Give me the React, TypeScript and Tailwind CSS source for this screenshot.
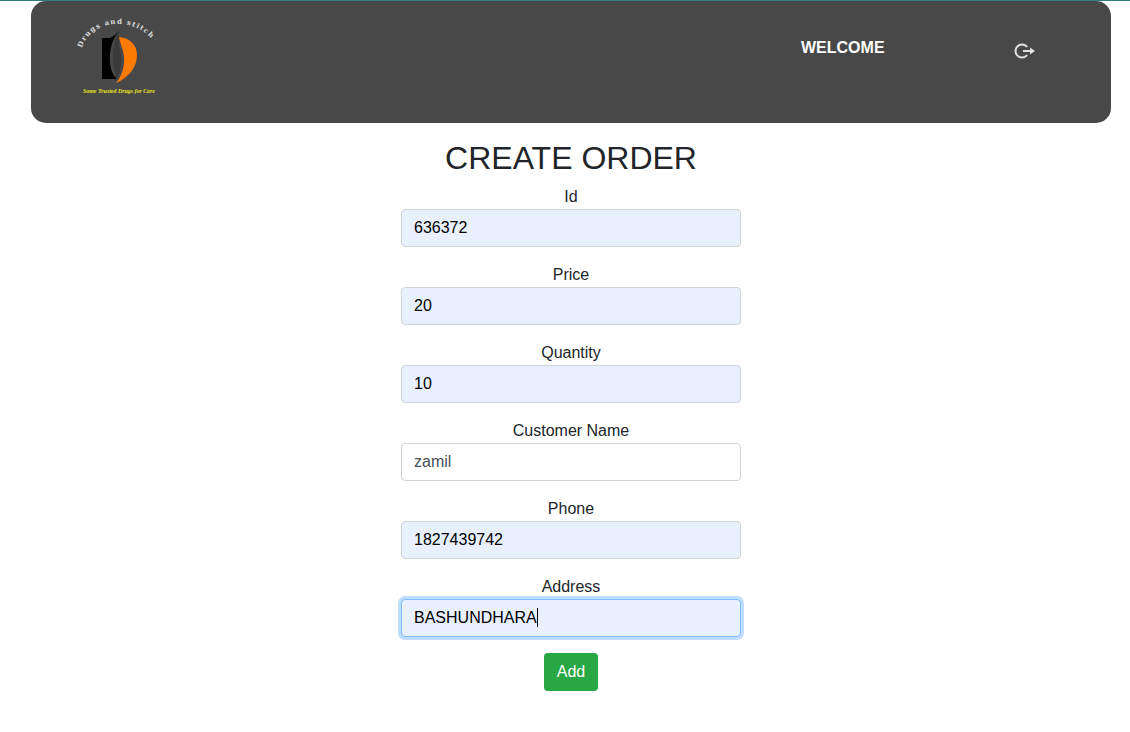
const fields = [
  { label: 'Id', value: '636372', filled: true },
  { label: 'Price', value: '20', filled: true },
  { label: 'Quantity', value: '10', filled: true },
  { label: 'Customer Name', value: 'zamil', filled: false },
  { label: 'Phone', value: '1827439742', filled: true },
];

const Logo = () => (
  <svg width="120" height="110" viewBox="0 0 120 110" className="block">
    <defs>
      <path id="logo-arc" d="M22 47 C 32 14, 86 14, 100 52" fill="none" />
    </defs>
    <text fontFamily="'DejaVu Serif', serif" fontSize="7" fontWeight="700" fill="#dcdcdc" letterSpacing="1.2">
      <textPath href="#logo-arc">Drugs and stitch</textPath>
    </text>
    {/* black half of the D */}
    <path d="M42 37 H50 C54 35 56 33 59 30 C52 38 49 50 50 62 C51 70 53 74 57 78 H42 Z" fill="#000" />
    <path d="M59 30 C54 40 52 52 53 60 C54 68 55 73 57 78 C60 72 62 64 61 55 C60 46 58 40 59 30 Z" fill="#3a3a3a" />
    {/* orange half */}
    <path d="M59 36 C70 37 77 44 77 54 C77 67 68 77 56 82 C62 75 65 65 64 55 C63 48 60 42 59 36 Z" fill="#ff7a00" />
    <text x="23" y="92" fontFamily="'Liberation Serif', serif" fontSize="7" fontStyle="italic" fontWeight="700" fill="#e6e61e" textLength="72" lengthAdjust="spacingAndGlyphs">
      Some Trusted Drugs for Care
    </text>
  </svg>
);

const LogoutIcon = () => (
  <svg width="24" height="20" viewBox="0 0 24 20" fill="none" className="block">
    <path d="M14.6 5.4 A6.5 6.5 0 1 0 14.6 14.6" stroke="#e2e2e2" strokeWidth="2" strokeLinecap="round" />
    <path d="M11 10 H18" stroke="#e2e2e2" strokeWidth="2" />
    <path d="M18 6.5 L23 10 L18 13.5 Z" fill="#e2e2e2" />
  </svg>
);

const inputBase =
  "block w-[340px] h-[38px] rounded-[4px] border px-3 text-base font-['Liberation_Sans',sans-serif] outline-none";

export default function App() {
  return (
    <div className="min-h-[732px] bg-white border-t border-[#2f7f7f] font-['Liberation_Sans',sans-serif] text-[#212529] overflow-hidden">
      <div className="ml-[31px] w-[1080px]">
        <header className="flex h-[122px] items-start rounded-[15px] bg-[#484848]">
          <div className="ml-[29px]">
            <Logo />
          </div>
          <span className="ml-[621px] mt-[37px] text-base leading-[20px] font-bold text-white">WELCOME</span>
          <div className="ml-[127px] mt-[40px]">
            <LogoutIcon />
          </div>
        </header>

        <main className="mt-4 flex flex-col items-center">
          <h2 className="text-[32px] leading-[38px] font-normal mb-2">CREATE ORDER</h2>
          <form className="flex flex-col items-center">
            {fields.map((f) => (
              <div key={f.label} className="mb-4 flex flex-col items-center">
                <label className="text-base leading-6">{f.label}</label>
                <input
                  readOnly
                  value={f.value}
                  className={
                    f.filled
                      ? `${inputBase} border-[#ced4da] bg-[#e8f0fe] text-black`
                      : `${inputBase} border-[#ced4da] bg-white text-[#495057]`
                  }
                />
              </div>
            ))}
            <div className="mb-4 flex flex-col items-center">
              <label className="text-base leading-6">Address</label>
              <div className="relative">
                <input
                  readOnly
                  value="BASHUNDHARA"
                  className={`${inputBase} border-[#80bdff] bg-[#e8f0fe] text-black shadow-[0_0_0_3px_rgba(0,123,255,0.25)]`}
                />
                <span className="absolute left-[136px] top-[9px] h-[19px] w-px bg-black" />
              </div>
            </div>
            <button
              type="button"
              className="h-[38px] w-[54px] rounded-[4px] bg-[#28a745] text-base text-white"
            >
              Add
            </button>
          </form>
        </main>
      </div>
    </div>
  );
}
